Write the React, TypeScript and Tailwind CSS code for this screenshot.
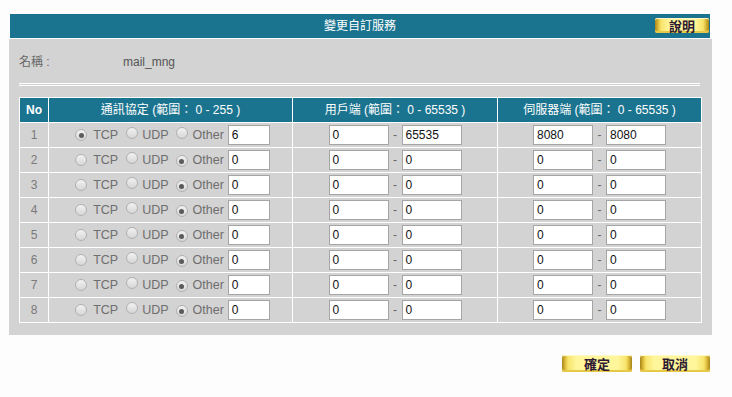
import React from "react";

const font = "font-['Liberation_Sans','Noto_Sans_CJK_TC',sans-serif]";
const goldBtn =
  "flex items-center justify-center rounded-[2px] bg-[linear-gradient(to_right,#a8841a_0px,#d9b737_3px,#f7e46a_6px,#fff59a_14px,#fff59a_calc(100%-14px),#f7e46a_calc(100%-6px),#d9b737_calc(100%-3px),#a8841a_100%)] shadow-[inset_0_1px_0_#fff9c8,inset_0_-2px_0_#e6c948] text-[13px] font-bold text-[#2e1a33] font-['Noto_Sans_CJK_TC',sans-serif] leading-none";

const rows = [
  { proto: "tcp", other: "6", c1: "0", c2: "65535", s1: "8080", s2: "8080" },
  ...Array.from({ length: 7 }, () => ({ proto: "other", other: "0", c1: "0", c2: "0", s1: "0", s2: "0" })),
];

const Radio: React.FC<{ checked?: boolean }> = ({ checked }) => (
  <span className="inline-flex h-[12px] w-[12px] items-center justify-center rounded-full border border-[#b0b0b0] bg-[linear-gradient(#f2f2f2,#d6d6d6)]">
    {checked && <span className="h-[5px] w-[5px] rounded-full bg-[#5a5a5a]" />}
  </span>
);

const Field: React.FC<{ value: string; w: string }> = ({ value, w }) => (
  <span className={`${w} inline-flex h-[20px] items-center border border-[#a5a5a5] bg-white pl-[3px] text-[12px] text-[#111]`}>
    {value}
  </span>
);

const Range: React.FC<{ a: string; b: string }> = ({ a, b }) => (
  <div className="flex items-center justify-center">
    <Field value={a} w="w-[60px]" />
    <span className="w-[13px] text-center text-[12px] text-[#666]">-</span>
    <Field value={b} w="w-[60px]" />
  </div>
);

export default function App() {
  return (
    <div className={`${font} h-[397px] w-[732px] bg-[#fdfdfd] pt-[14px]`}>
      <div className="ml-[10px] grid h-[24px] w-[700px] grid-cols-[55px_1fr_55px] items-center bg-[#1b748f]">
        <span />
        <span className="text-center text-[12px] text-white">變更自訂服務</span>
        <div className={`${goldBtn} mb-[2px] h-[15px] w-[54px]`}>說明</div>
      </div>

      <div className="ml-[9px] mt-[1px] w-[703px] bg-[#d3d3d3] px-[10px] pb-[12px] pt-[13px]">
        <div className="flex h-[20px] items-center text-[12px] text-[#666]">
          <span className="w-[104px]">名稱 :</span>
          <span className="text-[#555]">mail_mng</span>
        </div>

        <div className="mt-[11px] h-[3px] w-[681px] border-y border-white" />

        <table className="mt-[11px] w-[682px] table-fixed border-collapse border border-white text-[12px]">
          <colgroup>
            <col className="w-[29px]" />
            <col className="w-[244px]" />
            <col className="w-[205px]" />
            <col className="w-[204px]" />
          </colgroup>
          <thead>
            <tr className="h-[25px] bg-[#1b748f] text-white">
              <th className="border border-white font-bold">No</th>
              <th className="border border-white font-normal">通訊協定 (範圍： 0 - 255 )</th>
              <th className="border border-white font-normal">用戶端 (範圍： 0 - 65535 )</th>
              <th className="border border-white font-normal">伺服器端 (範圍： 0 - 65535 )</th>
            </tr>
          </thead>
          <tbody>
            {rows.map((r, i) => (
              <tr key={i} className="h-[25px]">
                <td className="border border-white text-center text-[#7a7a7a]">{i + 1}</td>
                <td className="border border-white">
                  <div className="flex items-center justify-center pl-[4px] text-[12.5px] text-[#6e6e6e]">
                    <Radio checked={r.proto === "tcp"} />
                    <span className="ml-[6px]">TCP</span>
                    <span className="ml-[8px]"><Radio /></span>
                    <span className="ml-[4px]">UDP</span>
                    <span className="ml-[7px]"><Radio checked={r.proto === "other"} /></span>
                    <span className="ml-[5px]">Other</span>
                    <span className="ml-[4px]"><Field value={r.other} w="w-[42px]" /></span>
                  </div>
                </td>
                <td className="border border-white">
                  <Range a={r.c1} b={r.c2} />
                </td>
                <td className="border border-white">
                  <Range a={r.s1} b={r.s2} />
                </td>
              </tr>
            ))}
          </tbody>
        </table>
      </div>

      <div className="mt-[20px] flex w-[710px] justify-end gap-[8px]">
        <div className={`${goldBtn} h-[17px] w-[70px]`}>確定</div>
        <div className={`${goldBtn} h-[17px] w-[70px]`}>取消</div>
      </div>
    </div>
  );
}
